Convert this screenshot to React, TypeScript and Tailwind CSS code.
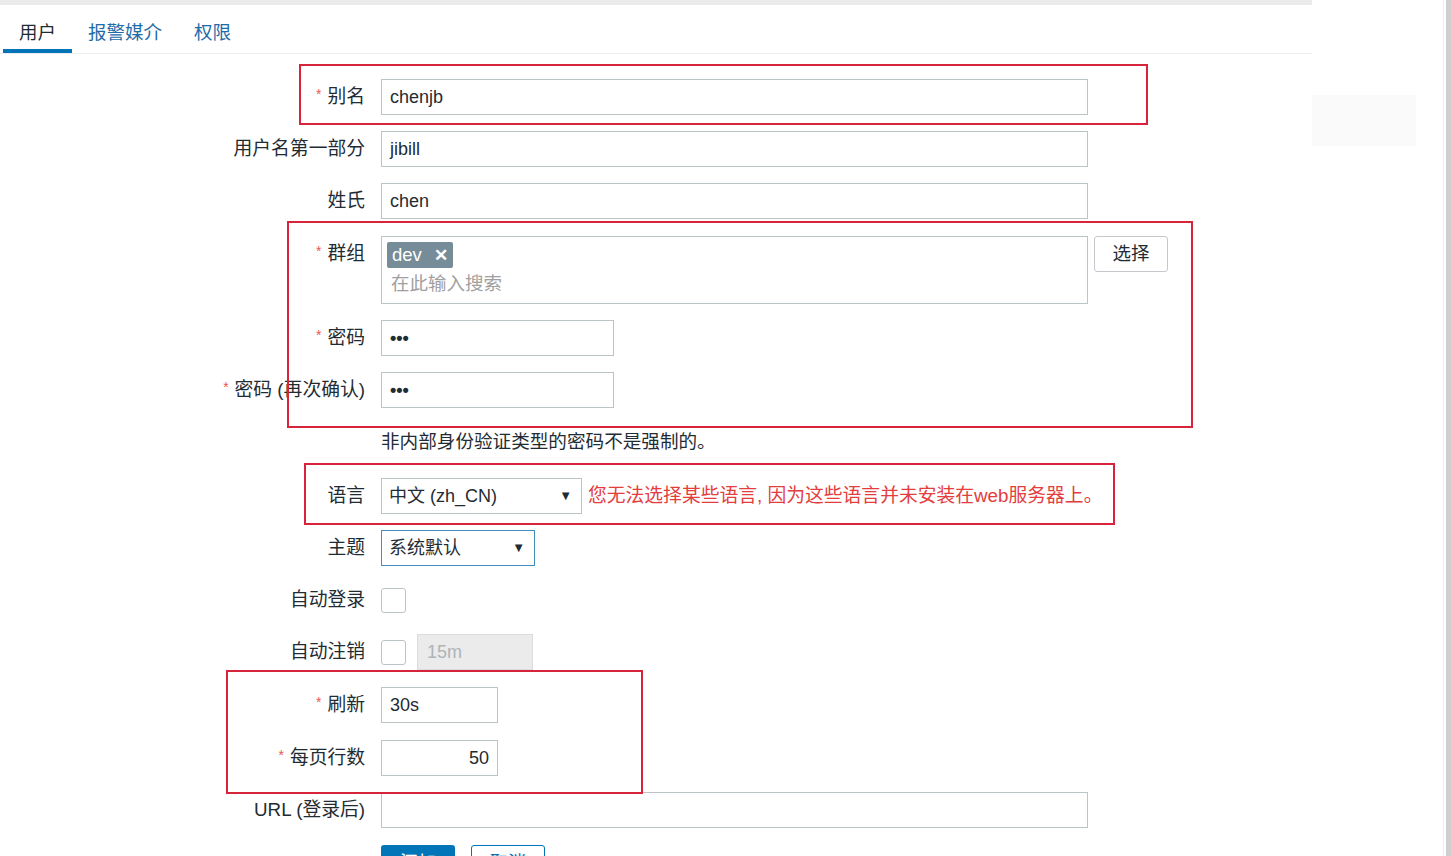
import React from "react";

const font = { fontFamily: '"Liberation Sans", "Noto Sans CJK SC", sans-serif' };

function Label({ text, req }: { text: string; req?: boolean }) {
  return (
    <div className="w-[365px] shrink-0 flex items-center justify-end h-[36px] text-[18.8px] text-[#1f2c33] whitespace-nowrap">
      {req && <span className="text-[#e45959] text-[14px] mr-[6px] -mt-[6px]">*</span>}
      <span>{text}</span>
    </div>
  );
}

function Row({ label, req, mt, children }: { label: string; req?: boolean; mt: string; children: React.ReactNode }) {
  return (
    <div className={`shrink-0 flex items-start gap-4 ${mt}`}>
      <Label text={label} req={req} />
      <div className="flex items-start">{children}</div>
    </div>
  );
}

function Input({ w, value, right, extra }: { w: string; value?: string; right?: boolean; extra?: string }) {
  return (
    <div
      className={`${w} h-[36px] border border-[#bcc4c8] bg-white flex items-center px-[8px] text-[18px] text-[#1f2c33] ${right ? "justify-end" : ""} ${extra ?? ""}`}
    >
      {value}
    </div>
  );
}

export default function App() {
  return (
    <div className="w-[1451px] h-[856px] overflow-hidden bg-white flex items-start" style={font}>
      <div className="w-[1312px] shrink-0 flex flex-col">
        <div className="shrink-0 h-[5px] bg-[#ebebeb]" />
        <div className="shrink-0 h-[49px] border-b border-[#ebeef0] flex items-end pl-[3px] text-[18.5px]">
          <div className="w-[69px] h-[44px] flex flex-col items-center justify-between">
            <span className="text-[#1f2c33] leading-none mt-[15px]">用户</span>
            <div className="w-full h-[4px] bg-[#0275b8]" />
          </div>
          <div className="h-[44px] flex items-start ml-[16px]">
            <span className="text-[#1e6ba8] leading-none mt-[15px]">报警媒介</span>
          </div>
          <div className="h-[44px] flex items-start ml-[32px]">
            <span className="text-[#1e6ba8] leading-none mt-[15px]">权限</span>
          </div>
        </div>

        <div className="relative shrink-0 flex flex-col pt-[25px]">
          <Row label="别名" req mt="">
            <Input w="w-[707px]" value="chenjb" />
          </Row>
          <Row label="用户名第一部分" mt="mt-[16px]">
            <Input w="w-[707px]" value="jibill" />
          </Row>
          <Row label="姓氏" mt="mt-[16px]">
            <Input w="w-[707px]" value="chen" />
          </Row>
          <Row label="群组" req mt="mt-[17px]">
            <div className="w-[707px] h-[68px] border border-[#bcc4c8] bg-white px-[5px] pt-[5px]">
              <div className="inline-flex items-center h-[26px] bg-[#768d99] rounded-[2px] px-[5px] text-white text-[18.5px] leading-none">
                <span>dev</span>
                <span className="ml-[12px] font-bold text-[17px]">✕</span>
              </div>
              <div className="text-[18.5px] text-[#a0a0a0] mt-[4px] pl-[4px] leading-[24px]">在此输入搜索</div>
            </div>
            <div className="ml-[6px] w-[74px] h-[36px] border border-[#c4c8cc] rounded-[3px] bg-white flex items-center justify-center text-[18.5px] text-[#1f2c33]">
              选择
            </div>
          </Row>
          <Row label="密码" req mt="mt-[16px]">
            <Input w="w-[233px]" value="•••" extra="font-bold text-[15px]" />
          </Row>
          <Row label="密码 (再次确认)" req mt="mt-[16px]">
            <Input w="w-[233px]" value="•••" extra="font-bold text-[15px]" />
          </Row>
          <div className="shrink-0 flex gap-4 mt-[16px]">
            <div className="w-[365px] shrink-0" />
            <div className="h-[36px] flex items-center text-[18.6px] text-[#1f2c33]">非内部身份验证类型的密码不是强制的。</div>
          </div>
          <Row label="语言" mt="mt-[18px]">
            <div className="w-[201px] h-[36px] border border-[#bcc4c8] bg-white flex items-center justify-between pl-[7px] pr-[9px] text-[18px] text-[#1f2c33]">
              <span>中文 (zh_CN)</span>
              <span className="text-[13px]">▼</span>
            </div>
            <div className="h-[36px] flex items-center ml-[6px] text-[18.8px] text-[#e33d3d] whitespace-nowrap">
              您无法选择某些语言, 因为这些语言并未安装在web服务器上。
            </div>
          </Row>
          <Row label="主题" mt="mt-[16px]">
            <div className="w-[154px] h-[36px] border border-[#3f8fc0] bg-white flex items-center justify-between pl-[7px] pr-[9px] text-[18px] text-[#1f2c33]">
              <span>系统默认</span>
              <span className="text-[13px]">▼</span>
            </div>
          </Row>
          <Row label="自动登录" mt="mt-[16px]">
            <div className="h-[36px] flex items-center">
              <div className="w-[25px] h-[25px] border border-[#bcc4c8] rounded-[3px] bg-white" />
            </div>
          </Row>
          <Row label="自动注销" mt="mt-[16px]">
            <div className="h-[36px] flex items-center">
              <div className="w-[25px] h-[25px] border border-[#bcc4c8] rounded-[3px] bg-white" />
            </div>
            <div className="ml-[11px] w-[116px] h-[36px] border border-[#dcdcdc] bg-[#ebebeb] flex items-center px-[9px] text-[18px] text-[#aeb4b8]">
              15m
            </div>
          </Row>
          <Row label="刷新" req mt="mt-[17px]">
            <Input w="w-[117px]" value="30s" />
          </Row>
          <Row label="每页行数" req mt="mt-[17px]">
            <Input w="w-[117px]" value="50" right />
          </Row>
          <Row label="URL (登录后)" mt="mt-[16px]">
            <Input w="w-[707px]" />
          </Row>
          <div className="shrink-0 flex gap-4 mt-[17px]">
            <div className="w-[365px] shrink-0" />
            <div className="w-[74px] h-[36px] rounded-[3px] bg-[#0275b8] text-white text-[18px] flex items-center justify-center">添加</div>
            <div className="w-[74px] h-[36px] rounded-[3px] border border-[#0275b8] bg-white text-[#0275b8] text-[18px] flex items-center justify-center">取消</div>
          </div>

          {/* annotation boxes */}
          <div className="absolute left-[299px] top-[10px] w-[849px] h-[61px] border-2 border-[#d8243a] pointer-events-none" />
          <div className="absolute left-[287px] top-[167px] w-[906px] h-[207px] border-2 border-[#d8243a] pointer-events-none" />
          <div className="absolute left-[304px] top-[409px] w-[811px] h-[62px] border-2 border-[#d8243a] pointer-events-none" />
          <div className="absolute left-[226px] top-[616px] w-[417px] h-[124px] border-2 border-[#d8243a] pointer-events-none" />
        </div>
      </div>
      <div className="flex-1 self-stretch flex">
        <div className="w-[131px] shrink-0 pt-[95px]">
          <div className="w-[104px] h-[51px] bg-[#fafafa]" />
        </div>
        <div className="w-[1px] bg-[#eeeeee]" />
        <div className="w-[2px] bg-white" />
        <div className="flex-1 bg-[#cfcfcf]" />
      </div>
    </div>
  );
}
